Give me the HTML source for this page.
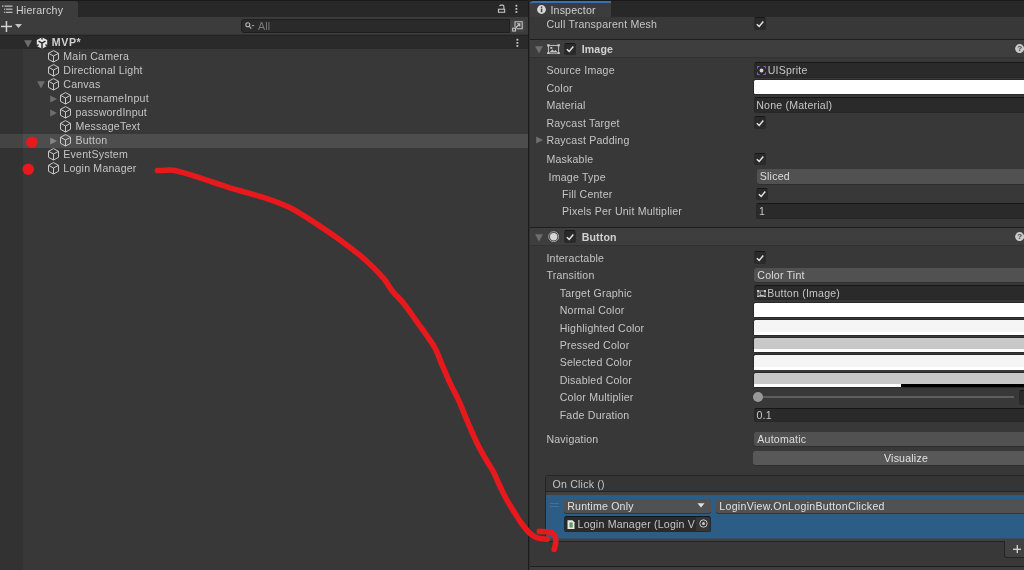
<!DOCTYPE html>
<html>
<head>
<meta charset="utf-8">
<title>Unity</title>
<style>
*{box-sizing:border-box;margin:0;padding:0}
html,body{width:1024px;height:570px;overflow:hidden;background:#383838;font-family:"Liberation Sans",sans-serif;font-size:10.6px;letter-spacing:0.2px;color:#c6c6c6}
div,span,svg{position:absolute}
#hier{left:0;top:0;width:528px;height:570px;background:#383838;overflow:hidden}
#split{left:528px;top:0;width:2px;height:570px;background:linear-gradient(90deg,#1b1b1b 0,#1b1b1b 1px,#313131 1px,#313131 2px)}
#insp{left:530px;top:0;width:494px;height:570px;background:#383838;overflow:hidden}
.t{will-change:opacity;opacity:0.999;white-space:nowrap;line-height:14px;height:14px;color:#c6c6c6}
.b{font-weight:bold;color:#d2d2d2}
.field{left:224px;width:280px;height:15px;background:#2a2a2a;border:1px solid #272727;border-top-color:#161616;border-radius:2.5px}
.drop{left:224px;width:280px;height:14.5px;background:#515151;border-radius:2.5px;box-shadow:0 0.8px 0 #2c2c2c}
.drop .t{color:#dedede}
.cb{left:224px;width:12px;height:12.5px;background:#2a2a2a;border:1px solid #2a2a2a;border-top-color:#171717;border-radius:2.5px}
.col{left:224.4px;width:280px;height:14.2px;background:#fff;border-radius:1.5px;box-shadow:0 0 0 0.8px #242424}
</style>
</head>
<body>
<div id="hier">
<div style="left:0;top:0;width:528px;height:17px;background:#282828;border-top:1px solid #191919"></div>
<div style="left:0;top:1px;width:78px;height:16px;background:#3c3c3c;border-radius:0 3px 0 0"></div>
<svg style="left:2px;top:5px" width="11" height="9" viewBox="0 0 11 9" fill="#c4c4c4"><rect x="0" y="0.5" width="1.5" height="1.2"/><rect x="2.5" y="0.5" width="8" height="1.2"/><rect x="2" y="3.6" width="1.3" height="1.2"/><rect x="4" y="3.6" width="6.5" height="1.2"/><rect x="2" y="6.7" width="1.3" height="1.2"/><rect x="4" y="6.7" width="6.5" height="1.2"/></svg>
<span class="t" style="left:16px;top:3px;color:#d2d2d2">Hierarchy</span>
<svg style="left:497px;top:4px" width="9" height="10" viewBox="0 0 9 10" fill="none" stroke="#c4c4c4" stroke-width="1.1"><path d="M2.6 2.2 Q2.8 1.1 4 1.1 H5.4 Q6.9 1.1 6.9 2.6 V5"/><rect x="1.45" y="5.25" width="6.2" height="3"/></svg>
<svg style="left:515px;top:4px" width="3" height="10" viewBox="0 0 3 10" fill="#c4c4c4"><rect x="0.5" y="0.8" width="1.8" height="1.8"/><rect x="0.5" y="4" width="1.8" height="1.8"/><rect x="0.5" y="7.1" width="1.8" height="1.8"/></svg>
<div style="left:0;top:17px;width:528px;height:17px;background:#3c3c3c"></div>
<div style="left:0;top:34px;width:528px;height:1px;background:#343434"></div>
<svg style="left:1px;top:20.6px" width="11" height="11" viewBox="0 0 11 11" fill="#d4d4d4"><rect x="4.7" y="0" width="1.5" height="11"/><rect x="0" y="4.7" width="11" height="1.5"/></svg>
<svg style="left:15px;top:24px" width="7" height="4" viewBox="0 0 7 4" fill="#c4c4c4"><path d="M0 0 H7 L3.5 4 Z"/></svg>
<div style="left:241px;top:18.5px;width:269px;height:14px;background:#2a2a2a;border:1px solid #1f1f1f;border-radius:3px 0 0 3px"></div>
<svg style="left:245px;top:22px" width="10" height="8" viewBox="0 0 10 8" fill="none" stroke="#b4b4b4" stroke-width="1.1"><circle cx="2.8" cy="2.8" r="2"/><path d="M4.3 4.3 L6.3 6.6"/><path d="M6.6 3 H9.4 L8 4.6 Z" fill="#b4b4b4" stroke="none"/></svg>
<span class="t" style="left:258px;top:19px;color:#7a7a7a">All</span>
<div style="left:510px;top:19.5px;width:14.5px;height:12.5px;background:#424242;border-radius:0 3px 3px 0"></div>
<svg style="left:511px;top:20px" width="13" height="12" viewBox="0 0 13 12" fill="none" stroke="#c4c4c4" stroke-width="1.1"><path d="M4 7 V1.7 H11.2 V8.7 H5.5"/><rect x="1.7" y="8.2" width="2.8" height="2.8" fill="#424242"/><path d="M4.6 8 L8.6 4 M6 3.8 H8.8 V6.6"/></svg>
<div style="left:0;top:35px;width:23px;height:535px;background:#323232"></div>
<div style="left:0;top:35px;width:528px;height:14px;background:#2a2a2a;border-top:1px solid #232323"></div>
<svg style="left:24.1px;top:39.7px" width="8" height="8" viewBox="0 0 8 8"><path d="M0.1 0.2 L7.9 0.2 L4 7.6 Z" fill="#6e6e6e"/></svg>
<svg style="left:36px;top:36.5px" width="12" height="12" viewBox="0 0 12 12"><path d="M6 0.2 L11.2 3.1 L11.2 8.9 L6 11.8 L0.8 8.9 L0.8 3.1 Z" fill="#e6e6e6"/><path d="M6 6.2 L6 11.8 M6 6.2 L2.6 4.2 M6 6.2 L9.4 4.2" stroke="#2a2a2a" stroke-width="1.5" fill="none"/><path d="M6 0 L6 2.6 M0.6 8.9 L2.6 7.7 M11.4 8.9 L9.4 7.7" stroke="#2a2a2a" stroke-width="1.4" fill="none"/></svg>
<span class="t b" style="left:51.7px;top:35px;letter-spacing:0.65px">MVP*</span>
<svg style="left:515.5px;top:37.7px" width="3" height="10" viewBox="0 0 3 10" fill="#c4c4c4"><rect x="0.5" y="0.8" width="1.8" height="1.8"/><rect x="0.5" y="4" width="1.8" height="1.8"/><rect x="0.5" y="7.1" width="1.8" height="1.8"/></svg>
<div style="left:0;top:133.5px;width:23px;height:14px;background:#444"></div>
<div style="left:23px;top:133.5px;width:505px;height:14px;background:#4d4d4d"></div>
<svg style="left:48.0px;top:50.3px" width="11" height="13" viewBox="0 0 11 13" fill="none" stroke="#d0d0d0" stroke-width="0.95" stroke-linejoin="round"><path d="M5.5 0.6 L10.5 3.3 L10.5 9.3 L5.5 12 L0.5 9.3 L0.5 3.3 Z"/><path d="M0.5 3.3 L5.5 6 L10.5 3.3 M5.5 6 L5.5 12"/></svg>
<span class="t" style="left:63.3px;top:49px;">Main Camera</span>
<svg style="left:48.0px;top:64.3px" width="11" height="13" viewBox="0 0 11 13" fill="none" stroke="#d0d0d0" stroke-width="0.95" stroke-linejoin="round"><path d="M5.5 0.6 L10.5 3.3 L10.5 9.3 L5.5 12 L0.5 9.3 L0.5 3.3 Z"/><path d="M0.5 3.3 L5.5 6 L10.5 3.3 M5.5 6 L5.5 12"/></svg>
<span class="t" style="left:63.3px;top:63px;">Directional Light</span>
<svg style="left:48.0px;top:78.3px" width="11" height="13" viewBox="0 0 11 13" fill="none" stroke="#d0d0d0" stroke-width="0.95" stroke-linejoin="round"><path d="M5.5 0.6 L10.5 3.3 L10.5 9.3 L5.5 12 L0.5 9.3 L0.5 3.3 Z"/><path d="M0.5 3.3 L5.5 6 L10.5 3.3 M5.5 6 L5.5 12"/></svg>
<span class="t" style="left:63.3px;top:77px;">Canvas</span>
<svg style="left:36.8px;top:81px" width="8" height="8" viewBox="0 0 8 8"><path d="M0.1 0.2 L7.9 0.2 L4 7.6 Z" fill="#6e6e6e"/></svg>
<svg style="left:60.3px;top:92.3px" width="11" height="13" viewBox="0 0 11 13" fill="none" stroke="#d0d0d0" stroke-width="0.95" stroke-linejoin="round"><path d="M5.5 0.6 L10.5 3.3 L10.5 9.3 L5.5 12 L0.5 9.3 L0.5 3.3 Z"/><path d="M0.5 3.3 L5.5 6 L10.5 3.3 M5.5 6 L5.5 12"/></svg>
<span class="t" style="left:75.5px;top:91px;">usernameInput</span>
<svg style="left:49.6px;top:95.2px" width="8" height="8" viewBox="0 0 8 8"><path d="M0.2 0.4 L7 4 L0.2 7.6 Z" fill="#6e6e6e"/></svg>
<svg style="left:60.3px;top:106.3px" width="11" height="13" viewBox="0 0 11 13" fill="none" stroke="#d0d0d0" stroke-width="0.95" stroke-linejoin="round"><path d="M5.5 0.6 L10.5 3.3 L10.5 9.3 L5.5 12 L0.5 9.3 L0.5 3.3 Z"/><path d="M0.5 3.3 L5.5 6 L10.5 3.3 M5.5 6 L5.5 12"/></svg>
<span class="t" style="left:75.5px;top:105px;">passwordInput</span>
<svg style="left:49.6px;top:109.2px" width="8" height="8" viewBox="0 0 8 8"><path d="M0.2 0.4 L7 4 L0.2 7.6 Z" fill="#6e6e6e"/></svg>
<svg style="left:60.3px;top:120.3px" width="11" height="13" viewBox="0 0 11 13" fill="none" stroke="#d0d0d0" stroke-width="0.95" stroke-linejoin="round"><path d="M5.5 0.6 L10.5 3.3 L10.5 9.3 L5.5 12 L0.5 9.3 L0.5 3.3 Z"/><path d="M0.5 3.3 L5.5 6 L10.5 3.3 M5.5 6 L5.5 12"/></svg>
<span class="t" style="left:75.5px;top:119px;">MessageText</span>
<svg style="left:60.3px;top:134.3px" width="11" height="13" viewBox="0 0 11 13" fill="none" stroke="#d0d0d0" stroke-width="0.95" stroke-linejoin="round"><path d="M5.5 0.6 L10.5 3.3 L10.5 9.3 L5.5 12 L0.5 9.3 L0.5 3.3 Z"/><path d="M0.5 3.3 L5.5 6 L10.5 3.3 M5.5 6 L5.5 12"/></svg>
<span class="t" style="left:75.5px;top:133px;">Button</span>
<svg style="left:49.6px;top:137.2px" width="8" height="8" viewBox="0 0 8 8"><path d="M0.2 0.4 L7 4 L0.2 7.6 Z" fill="#858585"/></svg>
<svg style="left:48.0px;top:148.3px" width="11" height="13" viewBox="0 0 11 13" fill="none" stroke="#d0d0d0" stroke-width="0.95" stroke-linejoin="round"><path d="M5.5 0.6 L10.5 3.3 L10.5 9.3 L5.5 12 L0.5 9.3 L0.5 3.3 Z"/><path d="M0.5 3.3 L5.5 6 L10.5 3.3 M5.5 6 L5.5 12"/></svg>
<span class="t" style="left:63.3px;top:147px;">EventSystem</span>
<svg style="left:48.0px;top:162.3px" width="11" height="13" viewBox="0 0 11 13" fill="none" stroke="#d0d0d0" stroke-width="0.95" stroke-linejoin="round"><path d="M5.5 0.6 L10.5 3.3 L10.5 9.3 L5.5 12 L0.5 9.3 L0.5 3.3 Z"/><path d="M0.5 3.3 L5.5 6 L10.5 3.3 M5.5 6 L5.5 12"/></svg>
<span class="t" style="left:63.3px;top:161px;">Login Manager</span>
</div>
<div id="split"></div>
<div id="insp">
<div style="left:0;top:0;width:494px;height:16.6px;background:#282828;border-top:1px solid #191919"></div>
<div style="left:0;top:1px;width:80.5px;height:16px;background:#3c3c3c;border-top:2px solid #3373b2;border-radius:3px 0 0 0"></div>
<svg style="left:7px;top:5.3px" width="9" height="9" viewBox="0 0 9 9"><circle cx="4.5" cy="4.5" r="4.4" fill="#d8d8d8"/><rect x="3.8" y="3.6" width="1.5" height="3.6" fill="#3c3c3c"/><rect x="3.8" y="1.5" width="1.5" height="1.4" fill="#3c3c3c"/></svg>
<span class="t" style="left:20.4px;top:3px;color:#d2d2d2">Inspector</span>
<span class="t" style="left:16.4px;top:17px;">Cull Transparent Mesh</span>
<div class="cb" style="left:224px;top:17px"><svg style="left:1px;top:1.5px" width="8" height="8" viewBox="0 0 8 8" fill="none" stroke="#e2e2e2" stroke-width="1.5"><path d="M0.8 4.3 L3.2 6.4 L7.3 1.6"/></svg></div>
<div style="left:0;top:38.9px;width:494px;height:1px;background:#1e1e1e"></div>
<div style="left:0;top:39.8px;width:494px;height:17.3px;background:#3e3e3e"></div>
<div style="left:0;top:57.099999999999994px;width:494px;height:0.7px;background:#313131"></div>
<svg style="left:4.7px;top:46.0px" width="8" height="8" viewBox="0 0 8 8"><path d="M0.1 0.2 L7.9 0.2 L4 7.6 Z" fill="#6e6e6e"/></svg>
<svg style="left:17.3px;top:43.5px" width="13" height="10.6" viewBox="0 0 13 10.6" fill="none" stroke="#c8c8c8" stroke-width="0.9"><rect x="1.4" y="1.4" width="10.2" height="7.8"/><g fill="#c8c8c8" stroke="none"><rect x="0.2" y="0.2" width="2.3" height="2.3"/><rect x="10.5" y="0.2" width="2.3" height="2.3"/><rect x="0.2" y="8.1" width="2.3" height="2.3"/><rect x="10.5" y="8.1" width="2.3" height="2.3"/><path d="M2.5 8.3 L5.3 5.5 L7.2 7.3 L8.6 5.9 L10.5 8.3 Z"/><rect x="3.3" y="3" width="2" height="1.8"/></g></svg>
<div class="cb" style="left:34.2px;top:42.8px"><svg style="left:1px;top:1.5px" width="8" height="8" viewBox="0 0 8 8" fill="none" stroke="#e2e2e2" stroke-width="1.5"><path d="M0.8 4.3 L3.2 6.4 L7.3 1.6"/></svg></div>
<span class="t b" style="left:51.7px;top:42px;letter-spacing:0.15px">Image</span>
<svg style="left:484.9px;top:44.1px" width="9.2" height="9.2" viewBox="0 0 10 10"><circle cx="5" cy="5" r="4.9" fill="#c9c9c9"/><text x="5.1" y="8.1" font-family="Liberation Sans, sans-serif" font-size="8.6" font-weight="bold" text-anchor="middle" fill="#454545">?</text></svg>
<span class="t" style="left:16.4px;top:63px;">Source Image</span>
<div class="field" style="top:62.3px;height:15.6px"><svg style="left:2.2px;top:2.6px" width="9" height="9" viewBox="0 0 9 9" fill="none"><rect x="0.5" y="0.5" width="8" height="8" stroke="#8a62c8" stroke-width="1" stroke-dasharray="4 4" stroke-dashoffset="2"/><circle cx="4.5" cy="4.5" r="1.9" fill="#d0d0d0"/></svg></div>
<span class="t" style="left:237.7px;top:63px;">UISprite</span>
<span class="t" style="left:16.4px;top:81px;">Color</span>
<div class="col" style="top:80.2px;height:14px"></div>
<span class="t" style="left:16.4px;top:98px;">Material</span>
<div class="field" style="top:97.3px;height:15.4px"></div>
<span class="t" style="left:226.2px;top:98px;">None (Material)</span>
<span class="t" style="left:16.4px;top:116px;">Raycast Target</span>
<div class="cb" style="left:224px;top:116px"><svg style="left:1px;top:1.5px" width="8" height="8" viewBox="0 0 8 8" fill="none" stroke="#e2e2e2" stroke-width="1.5"><path d="M0.8 4.3 L3.2 6.4 L7.3 1.6"/></svg></div>
<svg style="left:6.3px;top:136.2px" width="8" height="8" viewBox="0 0 8 8"><path d="M0.2 0.4 L7 4 L0.2 7.6 Z" fill="#6e6e6e"/></svg>
<span class="t" style="left:16.4px;top:133px;">Raycast Padding</span>
<span class="t" style="left:16.4px;top:152px;">Maskable</span>
<div class="cb" style="left:224px;top:152.6px"><svg style="left:1px;top:1.5px" width="8" height="8" viewBox="0 0 8 8" fill="none" stroke="#e2e2e2" stroke-width="1.5"><path d="M0.8 4.3 L3.2 6.4 L7.3 1.6"/></svg></div>
<span class="t" style="left:18.6px;top:170px;">Image Type</span>
<div class="drop" style="left:226.6px;top:169px"></div>
<span class="t" style="left:229.8px;top:169px;color:#dedede">Sliced</span>
<span class="t" style="left:32.1px;top:187px;">Fill Center</span>
<div class="cb" style="left:226.4px;top:187.6px"><svg style="left:1px;top:1.5px" width="8" height="8" viewBox="0 0 8 8" fill="none" stroke="#e2e2e2" stroke-width="1.5"><path d="M0.8 4.3 L3.2 6.4 L7.3 1.6"/></svg></div>
<span class="t" style="left:32.1px;top:204px;">Pixels Per Unit Multiplier</span>
<div class="field" style="left:226.4px;top:203.2px;height:15.6px"></div>
<span class="t" style="left:229px;top:204px;">1</span>
<div style="left:0;top:226.9px;width:494px;height:1px;background:#1e1e1e"></div>
<div style="left:0;top:227.8px;width:494px;height:17.3px;background:#3e3e3e"></div>
<div style="left:0;top:245.1px;width:494px;height:0.7px;background:#313131"></div>
<svg style="left:4.7px;top:234.0px" width="8" height="8" viewBox="0 0 8 8"><path d="M0.1 0.2 L7.9 0.2 L4 7.6 Z" fill="#6e6e6e"/></svg>
<svg style="left:18px;top:230.8px" width="11.4" height="11.4" viewBox="0 0 12 12"><circle cx="6" cy="6" r="5.3" fill="none" stroke="#a8a8a8" stroke-width="1"/><circle cx="6" cy="6" r="3.9" fill="#d6d6d6"/></svg>
<div class="cb" style="left:34.2px;top:230.1px"><svg style="left:1px;top:1.5px" width="8" height="8" viewBox="0 0 8 8" fill="none" stroke="#e2e2e2" stroke-width="1.5"><path d="M0.8 4.3 L3.2 6.4 L7.3 1.6"/></svg></div>
<span class="t b" style="left:51.7px;top:230px;letter-spacing:0.15px">Button</span>
<svg style="left:484.9px;top:232.1px" width="9.2" height="9.2" viewBox="0 0 10 10"><circle cx="5" cy="5" r="4.9" fill="#c9c9c9"/><text x="5.1" y="8.1" font-family="Liberation Sans, sans-serif" font-size="8.6" font-weight="bold" text-anchor="middle" fill="#454545">?</text></svg>
<span class="t" style="left:16.4px;top:251px;">Interactable</span>
<div class="cb" style="left:224px;top:251px"><svg style="left:1px;top:1.5px" width="8" height="8" viewBox="0 0 8 8" fill="none" stroke="#e2e2e2" stroke-width="1.5"><path d="M0.8 4.3 L3.2 6.4 L7.3 1.6"/></svg></div>
<span class="t" style="left:16.4px;top:268px;">Transition</span>
<div class="drop" style="left:224.3px;top:267.9px"></div>
<span class="t" style="left:227.3px;top:268px;color:#dedede">Color Tint</span>
<span class="t" style="left:29.7px;top:286px;">Target Graphic</span>
<div class="field" style="top:285.2px;height:14.6px"><svg style="left:2.3px;top:3.4px" width="9" height="7.8" viewBox="0 0 9 7.8" fill="none" stroke="#c8c8c8" stroke-width="0.8"><rect x="1" y="1" width="7" height="5.8"/><g fill="#c8c8c8" stroke="none"><rect x="0" y="0" width="2" height="2"/><rect x="7" y="0" width="2" height="2"/><rect x="0" y="5.8" width="2" height="2"/><rect x="7" y="5.8" width="2" height="2"/><path d="M1.6 6.2 L3.6 4.0 L5 5.3 L6 4.4 L7.4 6.2 Z"/><rect x="2.4" y="2.2" width="1.5" height="1.3"/></g></svg></div>
<span class="t" style="left:237.2px;top:286px;">Button (Image)</span>
<span class="t" style="left:29.7px;top:303px;">Normal Color</span>
<div class="col" style="top:303.0px;background:#ffffff"></div>
<div style="left:224.4px;top:314.2px;width:280px;height:3px;background:#ffffff"></div>
<span class="t" style="left:29.7px;top:321px;">Highlighted Color</span>
<div class="col" style="top:320.4px;background:#f5f5f5"></div>
<div style="left:224.4px;top:331.6px;width:280px;height:3px;background:#ffffff"></div>
<span class="t" style="left:29.7px;top:338px;">Pressed Color</span>
<div class="col" style="top:337.8px;background:#c8c8c8"></div>
<div style="left:224.4px;top:349.0px;width:280px;height:3px;background:#ffffff"></div>
<span class="t" style="left:29.7px;top:355px;">Selected Color</span>
<div class="col" style="top:355.3px;background:#f5f5f5"></div>
<div style="left:224.4px;top:366.5px;width:280px;height:3px;background:#ffffff"></div>
<span class="t" style="left:29.7px;top:373px;">Disabled Color</span>
<div class="col" style="top:372.7px;background:#c8c8c8"></div>
<div style="left:224.4px;top:383.9px;width:146.7px;height:3px;background:#fff"></div>
<div style="left:371.1px;top:383.9px;width:140px;height:3px;background:#000"></div>
<span class="t" style="left:29.7px;top:390px;">Color Multiplier</span>
<div style="left:228px;top:396.3px;width:256px;height:1.6px;background:#5e5e5e"></div>
<div style="left:223.4px;top:392.4px;width:9.4px;height:9.4px;border-radius:5px;background:#999"></div>
<div class="field" style="left:488.6px;top:389.5px;width:20px"></div>
<span class="t" style="left:29.7px;top:408px;">Fade Duration</span>
<div class="field" style="top:407.5px;height:14.5px"></div>
<span class="t" style="left:226.5px;top:408px;">0.1</span>
<span class="t" style="left:16.4px;top:432px;">Navigation</span>
<div class="drop" style="top:431.8px;height:14.2px"></div>
<span class="t" style="left:227.3px;top:432px;color:#dedede">Automatic</span>
<div class="drop" style="left:222.6px;top:451px;height:14px;background:#585858;border-color:#303030"></div>
<span class="t" style="left:354px;top:451px;color:#e4e4e4">Visualize</span>
<div style="left:15.2px;top:475px;width:490px;height:67px;background:#414141;border:1px solid #242424;border-radius:3px"></div>
<div style="left:16.2px;top:476.3px;width:480px;height:15.5px;background:#353535;border-bottom:1px solid #242424;border-radius:2px 0 0 0"></div>
<span class="t" style="left:22.5px;top:477px;">On Click ()</span>
<div style="left:16.2px;top:495px;width:480px;height:43px;background:#2c5d87"></div>
<div style="left:16.2px;top:538px;width:480px;height:1px;background:#374f64"></div>
<div style="left:20.3px;top:502.8px;width:8.6px;height:1px;background:#47708f"></div><div style="left:20.3px;top:505.6px;width:8.6px;height:1px;background:#47708f"></div>
<div class="drop" style="left:33.6px;top:498.7px;width:147.6px;height:14.8px;border-color:#2a3a4a #2f3f4f #23303c"><svg style="left:133px;top:4.6px" width="8" height="5" viewBox="0 0 8 5"><path d="M0.5 0.3 H7.5 L4 4.6 Z" fill="#e0e0e0"/></svg></div>
<span class="t" style="left:37.2px;top:499px;color:#e2e2e2">Runtime Only</span>
<div class="drop" style="left:186px;top:498.7px;width:320px;height:14.8px;border-color:#2a3a4a #2f3f4f #23303c"></div>
<span class="t" style="left:189.3px;top:499px;color:#e2e2e2;letter-spacing:0.3px">LoginView.OnLoginButtonClicked</span>
<div class="field" style="left:33.6px;top:516.3px;width:147.6px;height:15.4px;border-color:#161616 #1e2a36 #1e2a36"><svg style="left:2.8px;top:2.7px" width="8" height="9.4" viewBox="0 0 8 10"><path d="M0.3 0.3 H5.6 L7.7 2.4 V9.7 H0.3 Z" fill="#e8e8e8"/><rect x="2.4" y="2.6" width="3.4" height="5.4" fill="#5a9a5a"/></svg><div style="left:131px;top:0;width:14.6px;height:13.4px;background:#363636;border-radius:0 2px 2px 0"></div><svg style="left:134px;top:2.2px" width="9" height="9" viewBox="0 0 9 9"><circle cx="4.5" cy="4.5" r="3.7" fill="none" stroke="#c8c8c8" stroke-width="1"/><circle cx="4.5" cy="4.5" r="1.5" fill="#c8c8c8"/></svg></div>
<span class="t" style="left:47.6px;top:517px;">Login Manager (Login V</span>
<div style="left:474px;top:541px;width:30px;height:17.3px;background:#414141;border:1px solid #242424;border-top:none;border-radius:0 0 0 3px"></div>
<svg style="left:482.6px;top:544.8px" width="8.6" height="8.6" viewBox="0 0 9 9" fill="#d4d4d4"><rect x="3.8" y="0" width="1.4" height="9"/><rect x="0" y="3.8" width="9" height="1.4"/></svg>
<div style="left:0;top:566.3px;width:494px;height:1px;background:#1e1e1e"></div>
<div style="left:0;top:567.3px;width:494px;height:3px;background:#3e3e3e"></div>
</div>
<svg style="left:0;top:0" width="1024" height="570" viewBox="0 0 1024 570">
<circle cx="31.8" cy="142.2" r="5.7" fill="#e8191c"/><circle cx="28.2" cy="169.3" r="5.7" fill="#e8191c"/>
<path d="M157.4 170.5 C158.8 170.5 163.1 170.3 166.0 170.3 C168.9 170.3 169.5 169.5 174.7 170.6 C179.8 171.7 187.9 174.0 196.9 176.8 C205.9 179.6 216.8 183.7 228.4 187.3 C240.0 190.9 255.8 194.8 266.3 198.3 C276.8 201.8 283.2 204.1 291.6 208.4 C300.0 212.7 308.5 218.7 316.9 224.2 C325.3 229.7 334.2 235.8 342.1 241.6 C350.0 247.4 357.5 252.9 364.3 259.0 C371.1 265.1 378.5 272.5 383.2 277.9 C387.9 283.3 388.9 286.7 392.5 291.2 C396.1 295.7 400.6 299.6 404.7 304.7 C408.8 309.8 412.9 316.2 417.0 321.9 C421.1 327.6 426.2 334.6 429.3 339.1 C432.4 343.6 433.4 344.9 435.5 349.0 C437.6 353.1 439.2 358.0 441.6 363.7 C444.1 369.4 447.3 377.2 450.2 383.4 C453.1 389.5 456.4 395.3 458.8 400.6 C461.2 405.9 462.9 410.5 464.9 415.3 C466.9 420.1 468.9 424.9 471.0 429.7 C473.1 434.5 475.2 439.4 477.6 444.2 C480.0 449.0 482.9 454.1 485.5 458.7 C488.1 463.3 491.0 467.2 493.4 471.8 C495.8 476.4 497.8 481.7 500.0 486.3 C502.2 490.9 504.2 495.1 506.6 499.5 C509.0 503.9 511.9 508.4 514.5 512.6 C517.1 516.8 519.8 521.0 522.4 524.5 C525.0 528.0 527.7 531.4 530.3 533.7 C532.9 536.0 535.3 537.3 538.2 538.2 C541.1 539.1 546.0 539.0 547.5 539.2" fill="none" stroke="#e8191c" stroke-width="5.6" stroke-linecap="round" stroke-linejoin="round"/>
<path d="M539.3 531.4 C540.8 531.5 545.5 531.3 548.0 531.8 C550.5 532.3 552.7 532.9 554.0 534.2 C555.3 535.5 555.6 537.6 555.8 539.5 C556.0 541.4 555.6 543.6 555.3 545.3 C555.0 546.9 554.4 548.7 554.2 549.4" fill="none" stroke="#e8191c" stroke-width="5.6" stroke-linecap="round" stroke-linejoin="round"/>
</svg>
</body>
</html>
